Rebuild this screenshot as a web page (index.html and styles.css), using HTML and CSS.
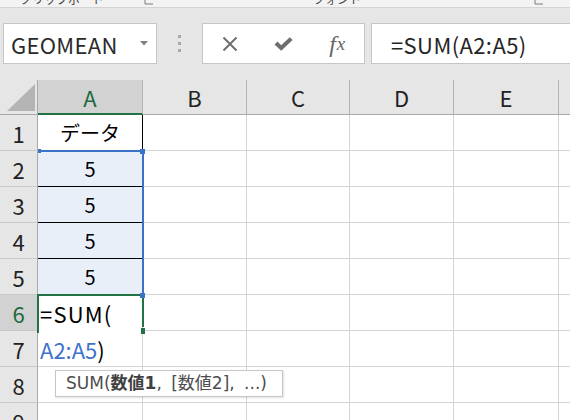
FILE: index.html
```html
<!DOCTYPE html>
<html lang="ja">
<head>
<meta charset="utf-8">
<title>Excel SUM</title>
<link rel="stylesheet" href="styles.css">
</head>
<body>
<div class="app">
  <div class="ribbon">
    <span class="grp grp-clip">クリップボード</span>
    <svg class="launch launch-1" width="14" height="7" viewBox="0 0 14 7"><path d="M2 0V4H10" fill="none" stroke="#7a7a7a" stroke-width="1"/></svg>
    <span class="grp grp-font">フォント</span>
    <svg class="launch launch-2" width="14" height="7" viewBox="0 0 14 7"><path d="M2 0V4H10" fill="none" stroke="#7a7a7a" stroke-width="1"/></svg>
  </div>
  <div class="fbar">
    <div class="namebox">
      <span class="nb-text">GEOMEAN</span>
      <svg class="nb-arrow" width="8" height="5" viewBox="0 0 8 5"><path d="M0 0H8L4 4.5Z" fill="#7f7f7f"/></svg>
    </div>
    <div class="grip"><i></i><i></i><i></i></div>
    <div class="fbtns">
      <div class="fbtn">
        <svg width="16" height="16" viewBox="0 0 16 16"><path d="M1.5 1.5L14.5 14.5M14.5 1.5L1.5 14.5" stroke="#6e6e6e" stroke-width="2" fill="none"/></svg>
      </div>
      <div class="fbtn">
        <svg width="19" height="14" viewBox="0 0 19 14"><path d="M0.5 7.5L3.5 4.6L7.2 8.2L15.8 0.2L18.6 3L7.2 13.8Z" fill="#6e6e6e"/></svg>
      </div>
      <div class="fbtn fx"><span class="fx-f">f</span><span class="fx-x">x</span></div>
    </div>
    <div class="finput">=SUM(A2:A5)</div>
  </div>
  <div class="sheet">
    <div class="grid">
      <div class="corner"><svg width="38" height="35" viewBox="0 0 38 35"><path d="M35 4V31H7Z" fill="#b4b4b4"/></svg></div>
      <div class="ch ch-sel">A</div><div class="ch">B</div><div class="ch">C</div><div class="ch">D</div><div class="ch">E</div><div class="ch"></div>

      <div class="rh">1</div><div class="c a1">データ</div><div class="c"></div><div class="c"></div><div class="c"></div><div class="c"></div><div class="c"></div>
      <div class="rh">2</div><div class="c sel">5</div><div class="c"></div><div class="c"></div><div class="c"></div><div class="c"></div><div class="c"></div>
      <div class="rh">3</div><div class="c sel">5</div><div class="c"></div><div class="c"></div><div class="c"></div><div class="c"></div><div class="c"></div>
      <div class="rh">4</div><div class="c sel">5</div><div class="c"></div><div class="c"></div><div class="c"></div><div class="c"></div><div class="c"></div>
      <div class="rh">5</div><div class="c sel">5</div><div class="c"></div><div class="c"></div><div class="c"></div><div class="c"></div><div class="c"></div>
      <div class="rh rh-sel">6</div><div class="c edit">=SUM(</div><div class="c"></div><div class="c"></div><div class="c"></div><div class="c"></div><div class="c"></div>
      <div class="rh">7</div><div class="c edit2"><span class="ref">A2:A5</span>)</div><div class="c"></div><div class="c"></div><div class="c"></div><div class="c"></div><div class="c"></div>
      <div class="rh">8</div><div class="c"></div><div class="c"></div><div class="c"></div><div class="c"></div><div class="c"></div><div class="c"></div>
      <div class="rh">9</div><div class="c"></div><div class="c"></div><div class="c"></div><div class="c"></div><div class="c"></div><div class="c"></div>
    </div>

    <div class="ov rng-top"></div>
    <div class="ov rng-right"></div>
    <div class="ov rng-tl"></div>
    <div class="ov rng-tr"></div>
    <div class="ov rng-br"></div>
    <div class="ov act-top"></div>
    <div class="ov act-left"></div>
    <div class="ov act-right"></div>
    <div class="ov act-handle"></div>

    <div class="tip">SUM(<b>数値1</b>, [数値2], ...)</div>
  </div>
</div>
</body>
</html>
```

FILE: styles.css
```css
* { box-sizing: border-box; margin: 0; padding: 0; }
html, body { width: 570px; height: 420px; overflow: hidden; background: #fff; }
body { font-family: "Noto Sans CJK JP", "Noto Sans", sans-serif; color: #000; }

.app { width: 570px; height: 420px; overflow: hidden; }

/* ribbon remnant */
.ribbon {
  height: 8px;
  background: #f3f3f3;
  border-bottom: 1px solid #d4d4d4;
  display: flex;
  align-items: flex-start;
  overflow: hidden;
}
.grp {
  font-size: 12px;
  line-height: 12px;
  margin-top: -7px;
  color: #444;
  white-space: nowrap;
}
.grp-clip { margin-left: 20px; width: 123px; }
.grp-font { margin-left: 156px; width: 220px; }
.launch { flex: none; }

/* formula bar */
.fbar {
  height: 72px;
  background: #e6e6e6;
  display: flex;
  align-items: flex-start;
  padding-top: 15px;
}
.namebox {
  margin-left: 3px;
  width: 154px;
  height: 41px;
  background: #fff;
  border: 1px solid #c6c6c6;
  display: flex;
  align-items: center;
  padding-left: 7px;
  padding-right: 8px;
}
.nb-text { font-size: 22px; color: #2b2b2b; line-height: 1; letter-spacing: 0.3px; }
.nb-arrow { margin-left: auto; }
.grip {
  width: 45px;
  height: 41px;
  display: flex;
  flex-direction: column;
  align-items: center;
  justify-content: center;
  gap: 4px;
}
.grip i { display: block; width: 3px; height: 3px; background: #a8a8a8; }
.fbtns {
  width: 163px;
  height: 41px;
  background: #fff;
  border: 1px solid #c6c6c6;
  display: flex;
}
.fbtn {
  width: 54px;
  display: flex;
  align-items: center;
  justify-content: center;
}
.fx {
  font-family: "Liberation Serif", serif;
  font-style: italic;
  color: #666;
  line-height: 1;
}
.fx-f { font-size: 24px; }
.fx-x { font-size: 19px; margin-left: 1px; }
.finput {
  margin-left: 6px;
  flex: 1;
  height: 41px;
  background: #fff;
  border: 1px solid #c6c6c6;
  border-right: none;
  padding-left: 19px;
  display: flex;
  align-items: center;
  font-size: 22px;
  letter-spacing: 0.4px;
  color: #262626;
}

/* sheet */
.sheet { position: relative; }
.grid {
  display: grid;
  grid-template-columns: 38px 105px 104px 103px 104px 105px 40px;
  grid-template-rows: 35px repeat(9, 36px);
}
.corner {
  background: #e6e6e6;
  border-right: 1px solid #a9a9a9;
  border-bottom: 1px solid #a9a9a9;
}
.corner svg { display: block; }
.ch {
  background: #e6e6e6;
  border-right: 1px solid #b4b4b4;
  border-bottom: 1px solid #ababab;
  display: flex;
  align-items: center;
  justify-content: center;
  font-size: 22px;
  color: #222;
}
.ch-sel {
  background: #d2d2d2;
  color: #1d6a3e;
  border-bottom: 2px solid #217346;
}
.rh {
  background: #e6e6e6;
  border-right: 1px solid #a9a9a9;
  border-bottom: 1px solid #c9c9c9;
  display: flex;
  align-items: center;
  justify-content: center;
  font-size: 22px;
  color: #222;
}
.rh-sel { background: #d2d2d2; color: #1d6a3e; }
.c {
  border-right: 1px solid #d4d4d4;
  border-bottom: 1px solid #d4d4d4;
  display: flex;
  align-items: center;
  justify-content: center;
  font-size: 20px;
}
.a1 { border-right-color: #000; border-bottom-color: #000; }
.sel { background: #e8eff9; border-bottom-color: #000; }
.edit {
  justify-content: flex-start;
  padding-left: 2px;
  font-size: 22px;
  letter-spacing: 1.2px;
  border-bottom-color: #fff;
}
.edit2 {
  justify-content: flex-start;
  padding-left: 2px;
  font-size: 22px;
}
.ref { color: #3f72cc; }

/* overlays: selection & active cell */
.ov { position: absolute; }
.rng-top { left: 40px; top: 70px; width: 103px; height: 2px; background: #3a72c8; }
.rng-right { left: 142px; top: 71px; width: 2px; height: 144px; background: #3a72c8; }
.rng-tl { left: 38px; top: 69px; width: 3px; height: 4px; background: #3a72c8; }
.rng-tr { left: 140px; top: 69px; width: 5px; height: 5px; background: #3a72c8; }
.rng-br { left: 140px; top: 213px; width: 5px; height: 5px; background: #3a72c8; }
.act-top { left: 37px; top: 214px; width: 103px; height: 2px; background: #217346; }
.act-left { left: 37px; top: 214px; width: 2px; height: 39px; background: #217346; }
.act-right { left: 142px; top: 218px; width: 2px; height: 29px; background: #217346; }
.act-handle { left: 141px; top: 248px; width: 4px; height: 6px; background: #217346; }

.tip {
  position: absolute;
  left: 55px;
  top: 290px;
  width: 228px;
  height: 27px;
  background: #fff;
  border: 1px solid #c6c6c6;
  box-shadow: 1px 1px 2px rgba(0, 0, 0, 0.12);
  padding-left: 10px;
  font-family: "DejaVu Sans", "Noto Sans CJK JP", sans-serif;
  font-size: 17px;
  line-height: 25px;
  color: #4d4d4d;
  white-space: nowrap;
  word-spacing: 4px;
}
.tip b { color: #3f3f3f; }
```
